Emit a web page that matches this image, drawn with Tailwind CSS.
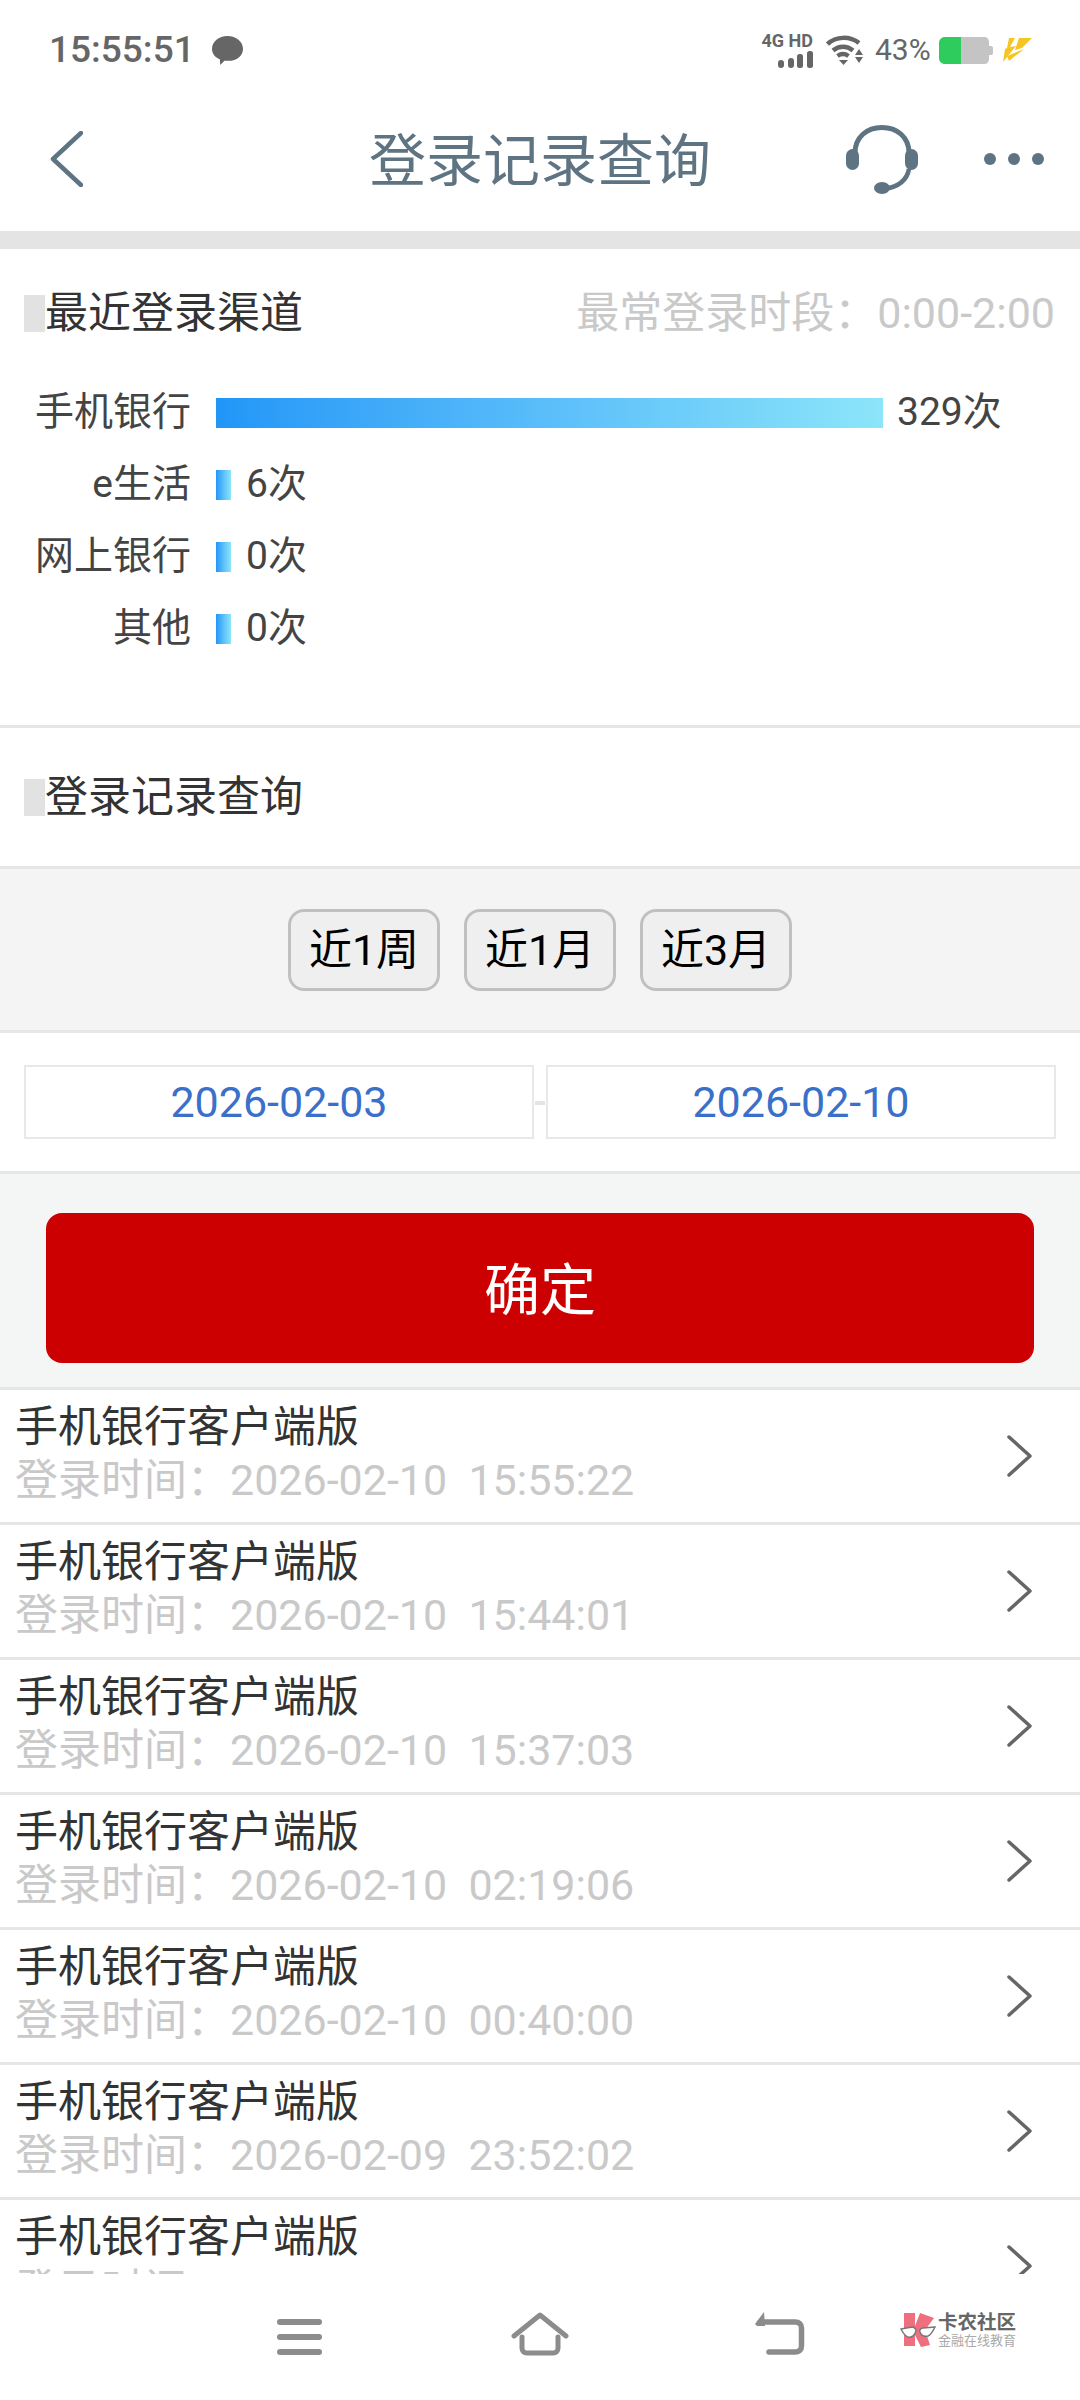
<!DOCTYPE html>
<html lang="zh">
<head>
    <meta charset="utf-8">
    <title>登录记录查询</title>
    <script src="https://cdn.jsdelivr.net/npm/@tailwindcss/browser@4"></script>
</head>
<body class="bg-white font-['Roboto','Noto_Sans_CJK_SC',sans-serif]">
<div class="flex flex-col w-[1080px] h-[2400px] overflow-hidden bg-white">

    <!-- status bar -->
    <div class="flex items-center justify-between h-[100px] pl-[49px] pr-[48px] shrink-0 text-[#666666]">
        <div class="flex items-center gap-[17px]">
            <span class="text-[37px] leading-[40px] font-medium">15:55:51</span>
            <svg class="w-[31px] h-[29px]" viewBox="0 0 30 28"><path fill="#666666" d="M15 0C23.500 0 30 5.500 30 12.500C30 19 24 24 16 24C14.500 24 13.500 24 12 24L8 28L7.500 22.500C3 20.500 0 17 0 12.500C0 5.500 6.500 0 15 0Z"/></svg>
        </div>
        <div class="flex items-center">
            <div class="flex flex-col items-end w-[47px]">
                <span class="text-[18px] leading-[17px] font-bold whitespace-nowrap">4G HD</span>
                <svg class="w-[35px] h-[17px] mt-[2px]" viewBox="0 0 35 17" fill="#666666">
                    <rect x="0" y="9" width="6" height="8" rx="3"/>
                    <rect x="10" y="7" width="6" height="10" rx="3"/>
                    <rect x="19" y="3" width="6" height="14" rx="2.500"/>
                    <rect x="29" y="0" width="6" height="17" rx="2.500"/>
                </svg>
            </div>
            <svg class="w-[37px] h-[30px] ml-[13px]" viewBox="0 0 37 30" fill="none" stroke="#666666" stroke-width="4.500">
                <path d="M1.500 9C10 1 24 1 33 8"/>
                <path d="M7 15.500C13 10.500 21 10.500 27 15.500"/>
                <path d="M11.500 21C15 18.500 19 18.500 22.500 21"/>
                <path fill="#666666" stroke="none" d="M13 25H22L17.500 30Z"/>
                <path fill="#666666" stroke="none" d="M33 14L37 20H29Z"/>
                <path fill="#666666" stroke="none" d="M29 22H37L33 28Z"/>
            </svg>
            <span class="text-[30px] leading-[36px] ml-[12px] w-[55px] whitespace-nowrap">43%</span>
            <svg class="w-[54px] h-[27px] ml-[9px]" viewBox="0 0 54 27">
                <path fill="#c4c4c4" d="M22 0H45C48 0 50 2 50 5V9H52C53.500 9 54 10 54 11V16C54 17 53.500 18 52 18H50V22C50 25 48 27 45 27H22Z"/>
                <path fill="#2ecc5c" d="M6 0H22V27H6C2.500 27 0 24.500 0 21V6C0 2.500 2.500 0 6 0Z"/>
            </svg>
            <svg class="w-[30px] h-[26px] ml-[9px]" viewBox="0 0 30 26" fill="#f5c623">
                <path d="M7 1H13L8 10L14 9L1 25L3 12L5 11Z"/>
                <path d="M17 1H30L20 11L13 13Z"/>
                <path d="M5 19L22 12L7 24Z"/>
            </svg>
        </div>
    </div>

    <!-- title bar -->
    <div class="grid grid-cols-[1fr_auto_1fr] items-center h-[131px] pb-[13px] pl-[36px] pr-[36px] shrink-0">
        <svg class="w-[33px] h-[56px] ml-[14px]" viewBox="0 0 33 56" fill="none" stroke="#5f7483" stroke-width="4.500" stroke-linecap="round" stroke-linejoin="round"><path d="M31 2L3 28L31 54"/></svg>
        <span class="text-[57px] leading-[70px] mt-[6px] text-[#5f7483]">登录记录查询</span>
        <div class="flex items-center justify-end">
            <svg class="w-[72px] h-[69px]" viewBox="0 0 72 69" fill="none">
                <path stroke="#5f7483" stroke-width="5" d="M9 28C9 12 21 2.500 36 2.500C51 2.500 63 12 63 28"/>
                <rect x="0" y="24" width="13" height="21" rx="6.500" fill="#5f7483"/>
                <rect x="59" y="24" width="13" height="21" rx="6.500" fill="#5f7483"/>
                <path stroke="#5f7483" stroke-width="4.500" d="M63 44C61 55 52 62 38 64"/>
                <ellipse cx="36" cy="63" rx="8" ry="6" fill="#5f7483"/>
            </svg>
            <div class="flex items-center gap-[12px] ml-[66px]">
                <span class="w-[12px] h-[12px] rounded-full bg-[#5f7483]"></span>
                <span class="w-[12px] h-[12px] rounded-full bg-[#5f7483]"></span>
                <span class="w-[12px] h-[12px] rounded-full bg-[#5f7483]"></span>
            </div>
        </div>
    </div>

    <div class="h-[18px] bg-[#e4e4e4] shrink-0"></div>

    <!-- recent channels -->
    <div class="h-[479px] pt-[46px] border-b-[3px] border-[#e6e6e6] shrink-0">
        <div class="flex items-center justify-between pl-[24px] pr-[25px]">
            <div class="flex items-center h-[37px]">
                <span class="w-[21px] h-[37px] bg-[#e2e2e2]"></span>
                <span class="text-[43px] leading-[37px] text-[#333333]">最近登录渠道</span>
            </div>
            <span class="text-[43px] leading-[37px] text-[#c9c9c9]">最常登录时段：0:00-2:00</span>
        </div>
        <div class="flex flex-col gap-[42px] mt-[66px] text-[39px] leading-[30px] text-[#444444]">
            <div class="flex items-center h-[30px]">
                <span class="w-[191px] pb-[3px] text-right">手机银行</span>
                <span class="w-[667px] h-[30px] ml-[25px] bg-gradient-to-r from-[#2196f7] to-[#8ce5f9]"></span>
                <span class="ml-[14px] pb-[3px]">329次</span>
            </div>
            <div class="flex items-center h-[30px]">
                <span class="w-[191px] pb-[3px] text-right">e生活</span>
                <span class="w-[15px] h-[30px] ml-[25px] bg-gradient-to-r from-[#2196f7] to-[#8ce5f9]"></span>
                <span class="ml-[15px] pb-[3px]">6次</span>
            </div>
            <div class="flex items-center h-[30px]">
                <span class="w-[191px] pb-[3px] text-right">网上银行</span>
                <span class="w-[15px] h-[30px] ml-[25px] bg-gradient-to-r from-[#2196f7] to-[#8ce5f9]"></span>
                <span class="ml-[15px] pb-[3px]">0次</span>
            </div>
            <div class="flex items-center h-[30px]">
                <span class="w-[191px] pb-[3px] text-right">其他</span>
                <span class="w-[15px] h-[30px] ml-[25px] bg-gradient-to-r from-[#2196f7] to-[#8ce5f9]"></span>
                <span class="ml-[15px] pb-[3px]">0次</span>
            </div>
        </div>
    </div>

    <!-- record query -->
    <div class="h-[141px] pt-[51px] pl-[24px] border-b-[3px] border-[#e6e6e6] shrink-0">
        <div class="flex items-center h-[37px]">
            <span class="w-[21px] h-[37px] bg-[#e2e2e2]"></span>
            <span class="text-[43px] leading-[37px] text-[#333333]">登录记录查询</span>
        </div>
    </div>

    <div class="flex justify-center gap-[24px] h-[164px] pt-[40px] bg-[#f4f4f4] border-b-[3px] border-[#e6e6e6] shrink-0">
        <button class="w-[152px] h-[82px] rounded-[16px] border-[3px] border-[#c0c0c0] bg-[#efefef] text-[43px] text-black">近1周</button>
        <button class="w-[152px] h-[82px] rounded-[16px] border-[3px] border-[#c0c0c0] bg-[#efefef] text-[43px] text-black">近1月</button>
        <button class="w-[152px] h-[82px] rounded-[16px] border-[3px] border-[#c0c0c0] bg-[#efefef] text-[43px] text-black">近3月</button>
    </div>

    <div class="flex items-start h-[141px] pt-[32px] px-[24px] border-b-[3px] border-[#e6e6e6] shrink-0">
        <div class="flex items-center justify-center w-[510px] h-[74px] border-2 border-[#e8e8e8] text-[43px] text-[#3a70c9]">2026-02-03</div>
        <span class="w-[10px] h-[4px] mx-[1px] mt-[36px] bg-[#e4e4e4]"></span>
        <div class="flex items-center justify-center w-[510px] h-[74px] border-2 border-[#e8e8e8] text-[43px] text-[#3a70c9]">2026-02-10</div>
    </div>

    <div class="h-[213px] pt-[39px] px-[46px] bg-[#f4f5f5] shrink-0">
        <button class="w-full h-[150px] pt-[6px] rounded-[16px] bg-[#cc0000] text-[56px] text-white">确定</button>
    </div>

    <!-- record list -->
    <div class="flex-1 min-h-0 overflow-hidden border-t-[3px] border-[#e6e6e6]">
        <div class="flex items-center justify-between h-[135px] pl-[15px] pr-[48px] border-b-[3px] border-[#e6e6e6]">
            <div class="text-[43px] pt-[11px] self-start">
                <div class="leading-[52px] text-[#333333]">手机银行客户端版</div>
                <div class="leading-[54px] text-[#c9c9c9] whitespace-pre">登录时间：2026-02-10  15:55:22</div>
            </div>
            <svg class="w-[25px] h-[42px]" viewBox="0 0 25 42" fill="none" stroke="#666666" stroke-width="3.500" stroke-linecap="round" stroke-linejoin="round"><path d="M2 2L23 21L2 40"/></svg>
        </div>
        <div class="flex items-center justify-between h-[135px] pl-[15px] pr-[48px] border-b-[3px] border-[#e6e6e6]">
            <div class="text-[43px] pt-[11px] self-start">
                <div class="leading-[52px] text-[#333333]">手机银行客户端版</div>
                <div class="leading-[54px] text-[#c9c9c9] whitespace-pre">登录时间：2026-02-10  15:44:01</div>
            </div>
            <svg class="w-[25px] h-[42px]" viewBox="0 0 25 42" fill="none" stroke="#666666" stroke-width="3.500" stroke-linecap="round" stroke-linejoin="round"><path d="M2 2L23 21L2 40"/></svg>
        </div>
        <div class="flex items-center justify-between h-[135px] pl-[15px] pr-[48px] border-b-[3px] border-[#e6e6e6]">
            <div class="text-[43px] pt-[11px] self-start">
                <div class="leading-[52px] text-[#333333]">手机银行客户端版</div>
                <div class="leading-[54px] text-[#c9c9c9] whitespace-pre">登录时间：2026-02-10  15:37:03</div>
            </div>
            <svg class="w-[25px] h-[42px]" viewBox="0 0 25 42" fill="none" stroke="#666666" stroke-width="3.500" stroke-linecap="round" stroke-linejoin="round"><path d="M2 2L23 21L2 40"/></svg>
        </div>
        <div class="flex items-center justify-between h-[135px] pl-[15px] pr-[48px] border-b-[3px] border-[#e6e6e6]">
            <div class="text-[43px] pt-[11px] self-start">
                <div class="leading-[52px] text-[#333333]">手机银行客户端版</div>
                <div class="leading-[54px] text-[#c9c9c9] whitespace-pre">登录时间：2026-02-10  02:19:06</div>
            </div>
            <svg class="w-[25px] h-[42px]" viewBox="0 0 25 42" fill="none" stroke="#666666" stroke-width="3.500" stroke-linecap="round" stroke-linejoin="round"><path d="M2 2L23 21L2 40"/></svg>
        </div>
        <div class="flex items-center justify-between h-[135px] pl-[15px] pr-[48px] border-b-[3px] border-[#e6e6e6]">
            <div class="text-[43px] pt-[11px] self-start">
                <div class="leading-[52px] text-[#333333]">手机银行客户端版</div>
                <div class="leading-[54px] text-[#c9c9c9] whitespace-pre">登录时间：2026-02-10  00:40:00</div>
            </div>
            <svg class="w-[25px] h-[42px]" viewBox="0 0 25 42" fill="none" stroke="#666666" stroke-width="3.500" stroke-linecap="round" stroke-linejoin="round"><path d="M2 2L23 21L2 40"/></svg>
        </div>
        <div class="flex items-center justify-between h-[135px] pl-[15px] pr-[48px] border-b-[3px] border-[#e6e6e6]">
            <div class="text-[43px] pt-[11px] self-start">
                <div class="leading-[52px] text-[#333333]">手机银行客户端版</div>
                <div class="leading-[54px] text-[#c9c9c9] whitespace-pre">登录时间：2026-02-09  23:52:02</div>
            </div>
            <svg class="w-[25px] h-[42px]" viewBox="0 0 25 42" fill="none" stroke="#666666" stroke-width="3.500" stroke-linecap="round" stroke-linejoin="round"><path d="M2 2L23 21L2 40"/></svg>
        </div>
        <div class="flex items-center justify-between h-[135px] pl-[15px] pr-[48px] border-b-[3px] border-[#e6e6e6]">
            <div class="text-[43px] pt-[11px] self-start">
                <div class="leading-[52px] text-[#333333]">手机银行客户端版</div>
                <div class="leading-[54px] text-[#c9c9c9] whitespace-pre">登录时间：</div>
            </div>
            <svg class="w-[25px] h-[42px]" viewBox="0 0 25 42" fill="none" stroke="#666666" stroke-width="3.500" stroke-linecap="round" stroke-linejoin="round"><path d="M2 2L23 21L2 40"/></svg>
        </div>
    </div>

    <!-- system nav -->
    <div class="relative flex items-start h-[126px] pt-[38px] pl-[277px] bg-white shrink-0">
        <div class="flex flex-col gap-[9px] w-[45px] mt-[7px]">
            <span class="h-[6px] rounded-[3px] bg-[#8c8c8c]"></span>
            <span class="h-[6px] rounded-[3px] bg-[#8c8c8c]"></span>
            <span class="h-[6px] rounded-[3px] bg-[#8c8c8c]"></span>
        </div>
        <svg class="w-[58px] h-[44px] ml-[189px]" viewBox="0 0 58 44" fill="none" stroke="#8c8c8c" stroke-linecap="round" stroke-linejoin="round">
            <path stroke-width="5" d="M3 24L29 3L55 24"/>
            <path stroke-width="5" d="M11 25V36C11 39 13 41 16 41H42C45 41 47 39 47 36V25"/>
        </svg>
        <svg class="w-[50px] h-[43px] ml-[186px]" viewBox="0 0 50 43" fill="none" stroke="#8c8c8c" stroke-width="5.500" stroke-linecap="round" stroke-linejoin="round">
            <path d="M5 10H40C44 10 46.500 12 46.500 16V34C46.500 38 44 40 40 40H14"/>
            <path fill="#8c8c8c" stroke="none" d="M9 0L0 12L2 14H10Z"/>
        </svg>
        <div class="absolute left-[900px] top-[39px] flex items-start">
            <svg class="w-[36px] h-[35px]" viewBox="0 0 36 35">
                <path fill="#ef6f7f" d="M4 0H15V13L20 0L34 5L25 17L30 32L21 34L15 22V33H4Z"/>
                <path fill="#ffffff" stroke="#777777" stroke-width="1.500" d="M1 16L12 14C14 14 16 16 16 18C15 22 12 25 8 24C5 23 3 20 1 16Z"/>
                <path fill="#ffffff" stroke="#777777" stroke-width="1.500" d="M35 14L23 15C21 15 19 17 20 19C21 22 24 24 28 23C31 22 33 18 35 14Z"/>
            </svg>
            <div class="flex flex-col ml-[2px] whitespace-nowrap">
                <span class="text-[19.500px] leading-[20px] font-bold text-[#666666]">卡农社区</span>
                <span class="text-[13px] leading-[14px] mt-[1px] text-[#aaaaaa]">金融在线教育</span>
            </div>
        </div>
    </div>
</div>
</body>
</html>
